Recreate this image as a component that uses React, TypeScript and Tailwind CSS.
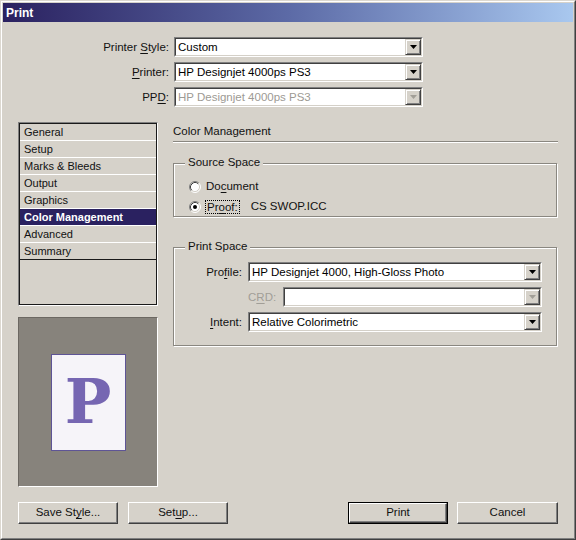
import React from "react";

function U({ children }: { children: React.ReactNode }) {
  return <span className="underline decoration-1 underline-offset-[2px]">{children}</span>;
}

function Arrow({ disabled }: { disabled?: boolean }) {
  return (
    <svg width="7" height="4" viewBox="0 0 7 4">
      <polygon points="0,0 7,0 3.5,4" fill={disabled ? "#a29f98" : "#000"} />
    </svg>
  );
}

function Select({ value, disabled, className }: { value: string; disabled?: boolean; className?: string }) {
  return (
    <div
      className={`h-[20px] border border-t-[#808080] border-l-[#808080] border-r-white border-b-white ${className ?? ""}`}
    >
      <div className="h-full flex border border-t-[#404040] border-l-[#404040] border-r-[#d4d0c8] border-b-[#d4d0c8] bg-white">
        <div
          className={`flex-1 pl-[2px] leading-[16px] whitespace-nowrap overflow-hidden ${
            disabled ? "text-[#9d9a94]" : "text-black"
          }`}
        >
          {value}
        </div>
        <div className="w-[16px] h-full flex items-center justify-center bg-[#d6d2ca] border border-t-[#d6d2ca] border-l-[#d6d2ca] border-r-[#404040] border-b-[#404040] shadow-[inset_1px_1px_0_#fff,inset_-1px_-1px_0_#808080]">
          <Arrow disabled={disabled} />
        </div>
      </div>
    </div>
  );
}

function Btn({ children, def, className }: { children: React.ReactNode; def?: boolean; className?: string }) {
  const inner = (
    <div className="h-full w-full flex items-center justify-center border border-t-white border-l-white border-r-[#404040] border-b-[#404040] shadow-[inset_-1px_-1px_0_#808080]">
      {children}
    </div>
  );
  return (
    <div className={`h-[22px] ${def ? "border border-black" : ""} ${className ?? ""}`}>{inner}</div>
  );
}

function Radio({ checked }: { checked?: boolean }) {
  return (
    <svg width="12" height="12" viewBox="0 0 12 12" className="shrink-0">
      <circle cx="6" cy="6" r="5" fill="#fff" />
      <path d="M2.11 9.89 A5.5 5.5 0 0 1 9.89 2.11" fill="none" stroke="#808080" strokeWidth="1" />
      <path d="M9.89 2.11 A5.5 5.5 0 0 1 2.11 9.89" fill="none" stroke="#ffffff" strokeWidth="1" />
      <path d="M2.82 9.18 A4.5 4.5 0 0 1 9.18 2.82" fill="none" stroke="#404040" strokeWidth="1" />
      <path d="M9.18 2.82 A4.5 4.5 0 0 1 2.82 9.18" fill="none" stroke="#d4d0c8" strokeWidth="1" />
      {checked && <circle cx="6" cy="6" r="2" fill="#000" />}
    </svg>
  );
}

function Group({ title, className, children }: { title: string; className?: string; children: React.ReactNode }) {
  return (
    <div
      className={`relative border border-[#8a8780] shadow-[inset_1px_1px_0_#fff,1px_1px_0_#fff] ${className ?? ""}`}
    >
      <span className="absolute left-[11px] top-[-9px] px-[3px] bg-[#d6d2ca] leading-[14px]">{title}</span>
      {children}
    </div>
  );
}

const items = [
  "General",
  "Setup",
  "Marks & Bleeds",
  "Output",
  "Graphics",
  "Color Management",
  "Advanced",
  "Summary",
];

export default function App() {
  return (
    <div className="w-[576px] h-[540px] bg-[#d6d2ca] border border-t-[#dcd8d0] border-l-[#dcd8d0] border-r-[#404040] border-b-[#404040] font-['Liberation_Sans',Arial,sans-serif] text-[11.5px] text-[#111]">
      <div className="h-full flex flex-col border border-t-white border-l-white border-r-[#808080] border-b-[#808080] p-px">
        {/* Title bar */}
        <div className="h-[19px] shrink-0 flex items-center pl-[3px] bg-gradient-to-r from-[#2b2160] via-[#5c6aa6] to-[#a9c8ef]">
          <span className="text-white font-bold text-[12px] leading-none">Print</span>
        </div>

        {/* Top form */}
        <div className="mt-[15px] flex flex-col gap-[5px]">
          <div className="flex items-center">
            <div className="w-[166px] text-right leading-[20px]">
              Printer <U>S</U>tyle:
            </div>
            <Select value="Custom" className="ml-[5px] w-[249px]" />
          </div>
          <div className="flex items-center">
            <div className="w-[166px] text-right leading-[20px]">
              <U>P</U>rinter:
            </div>
            <Select value="HP Designjet 4000ps PS3" className="ml-[5px] w-[249px]" />
          </div>
          <div className="flex items-center">
            <div className="w-[166px] text-right leading-[20px]">
              PP<U>D</U>:
            </div>
            <Select value="HP Designjet 4000ps PS3" disabled className="ml-[5px] w-[249px]" />
          </div>
        </div>

        {/* Main */}
        <div className="mt-[15px] flex pl-[15px]">
          {/* Left column */}
          <div className="w-[140px] flex flex-col">
            <div className="h-[184px] border border-t-[#808080] border-l-[#808080] border-r-white border-b-white">
              <div className="h-full border border-[#1a1a1a] flex flex-col">
                {items.map((it, i) => {
                  const sel = it === "Color Management";
                  const last = i === items.length - 1;
                  return (
                    <div
                      key={it}
                      className={`h-[17px] pl-[4px] leading-[16px] text-[11px] border-b ${
                        last ? "border-[#1a1a1a]" : "border-white"
                      } ${sel ? "bg-[#2a2160] text-white font-bold" : ""}`}
                    >
                      {it}
                    </div>
                  );
                })}
              </div>
            </div>
            <div className="mt-[11px] h-[170px] flex items-center justify-center bg-[#87837c] border border-t-[#6c6862] border-l-[#6c6862] border-r-white border-b-white">
              <div className="w-[75px] h-[97px] flex items-center justify-center bg-[#f6f4f9] border border-[#5e5496]">
                <span className="font-['DejaVu_Serif',serif] font-bold text-[62px] leading-none text-[#7666b2]">P</span>
              </div>
            </div>
          </div>

          {/* Right column */}
          <div className="ml-[15px] w-[385px] flex flex-col">
            <div className="h-[18px] leading-[18px]">Color Management</div>
            <div className="mt-[1px] h-[2px] border-t border-[#8a8780] border-b border-b-white" />

            <Group title="Source Space" className="mt-[20px] w-[384px] h-[54px] pt-[14px] pl-[15px]">
              <div className="flex flex-col gap-[2px]">
                <div className="h-[18px] flex items-center">
                  <Radio />
                  <span className="ml-[5px]">
                    Do<U>c</U>ument
                  </span>
                </div>
                <div className="h-[18px] flex items-center">
                  <Radio checked />
                  <span className="ml-[4px] px-[1px] border border-dotted border-black leading-[12px]">
                    Pr<U>o</U>of:
                  </span>
                  <span className="ml-[11px]">CS SWOP.ICC</span>
                </div>
              </div>
            </Group>

            <Group title="Print Space" className="mt-[30px] w-[384px] h-[99px] pt-[14px]">
              <div className="flex flex-col gap-[5px]">
                <div className="flex items-center">
                  <div className="w-[68px] text-right leading-[20px]">
                    Pro<U>f</U>ile:
                  </div>
                  <Select value="HP Designjet 4000, High-Gloss Photo" className="ml-[6px] w-[294px]" />
                </div>
                <div className="flex items-center">
                  <div className="ml-[74px] w-[30px] leading-[20px] text-[#a19e97]">
                    C<U>R</U>D:
                  </div>
                  <Select value="" disabled className="ml-[5px] w-[259px]" />
                </div>
                <div className="flex items-center">
                  <div className="w-[68px] text-right leading-[20px]">
                    <U>I</U>ntent:
                  </div>
                  <Select value="Relative Colorimetric" className="ml-[6px] w-[294px]" />
                </div>
              </div>
            </Group>
          </div>
        </div>

        {/* Buttons */}
        <div className="mt-[15px] flex pl-[15px] pr-[15px]">
          <Btn className="w-[100px]">
            Save St<U>y</U>le...
          </Btn>
          <Btn className="ml-[10px] w-[100px]">
            Set<U>u</U>p...
          </Btn>
          <Btn def className="ml-auto w-[100px]">
            Print
          </Btn>
          <Btn className="ml-[9px] w-[101px]">Cancel</Btn>
        </div>
      </div>
    </div>
  );
}
